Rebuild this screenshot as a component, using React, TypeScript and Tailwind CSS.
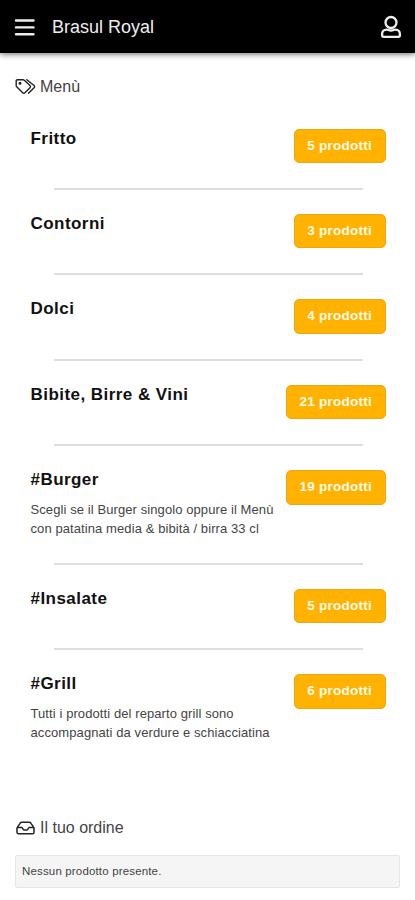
interface Category {
  name: string;
  count: number;
  description?: string;
}

const categories: Category[] = [
  { name: "Fritto", count: 5 },
  { name: "Contorni", count: 3 },
  { name: "Dolci", count: 4 },
  { name: "Bibite, Birre & Vini", count: 21 },
  {
    name: "#Burger",
    count: 19,
    description: "Scegli se il Burger singolo oppure il Menù con patatina media & bibità / birra 33 cl",
  },
  { name: "#Insalate", count: 5 },
  {
    name: "#Grill",
    count: 6,
    description: "Tutti i prodotti del reparto grill sono accompagnati da verdure e schiacciatina",
  },
];

function MenuIcon() {
  return (
    <svg width="21" height="18" viewBox="0 0 21 18" stroke="#eee" strokeWidth="2.4" strokeLinecap="round">
      <path d="M2 2.5h17.500M2 9.400h17.500M2 16.200h17.500" />
    </svg>
  );
}

function UserIcon() {
  return (
    <svg width="22" height="24" viewBox="0 0 22 24" fill="none" stroke="#eee" strokeWidth="2.3">
      <circle cx="11" cy="7.5" r="5.5" />
      <path d="M6.500 14.600c1.400 0 2.300.9 4.500.9s3.100-.9 4.500-.9c2.600 0 4.400 2 4.400 4.500v1.200c0 1-.6 1.600-1.600 1.600H3.700c-1 0-1.600-.6-1.600-1.600v-1.200c0-2.500 1.800-4.500 4.400-4.500z" />
    </svg>
  );
}

function TagsIcon() {
  return (
    <svg width="22" height="18" viewBox="0 0 22 18" fill="none" stroke="#222" strokeWidth="1.4" strokeLinejoin="round" strokeLinecap="round">
      <path d="M1.200 2.900v4.600c0 .5.200 1 .5 1.300l6 6c.6.6 1.600.6 2.200 0l5.100-5.100c.6-.6.6-1.600 0-2.200L9.300 2.200c-.3-.3-.8-.5-1.300-.5H2.400c-.7 0-1.200.5-1.200 1.200z" />
      <path d="M11.800 1.800l7.300 5.700c.7.600.7 1.600 0 2.200l-5.600 5.600" />
      <circle cx="5" cy="5.3" r=".8" fill="#222" />
    </svg>
  );
}

function TrayIcon() {
  return (
    <svg width="19" height="14" viewBox="0 0 19 14" fill="none" stroke="#222" strokeWidth="1.5" strokeLinejoin="round">
      <path d="M1 6.800 4 2.300c.4-.7 1-1.100 1.800-1.100h7.400c.8 0 1.400.4 1.800 1.100l3 4.500v4.400c0 .9-.7 1.600-1.600 1.600H2.600c-.9 0-1.600-.7-1.600-1.600z" />
      <path d="M1.200 6.500h4.600c.9 0 1 2.500 2.200 2.500h3c1.200 0 1.300-2.500 2.200-2.500h4.600" />
    </svg>
  );
}

function CategoryRow({ category }: { category: Category }) {
  return (
    <li className="group">
      <div className="flex items-start justify-between">
        <div className="w-[250px] pt-px">
          <h2 className="text-[17px] leading-[18px] font-bold tracking-[0.45px] whitespace-nowrap text-[#111]">
            {category.name}
          </h2>
          {category.description && (
            <p className="mt-[11px] text-[13px] leading-[19px] tracking-[0.09px] text-[#444]">
              {category.description}
            </p>
          )}
        </div>
        <button
          type="button"
          className="h-[34.6px] shrink-0 rounded-[5px] border border-[#eda710] bg-[#ffb300] px-[12.5px] text-[13.5px] font-bold tracking-[0.25px] whitespace-nowrap text-[#fffbe8]"
        >
          {category.count} prodotti
        </button>
      </div>
      <hr className="mx-[23px] mt-[24.8px] mb-6 border-t-2 border-[#dedede] group-last:hidden" />
    </li>
  );
}

export default function App() {
  return (
    <div className="h-[900px] overflow-hidden bg-white font-['Liberation_Sans',Arial,sans-serif] text-[#444]">
      <header className="flex h-[53px] items-center bg-black pr-[13px] pl-[14px] shadow-[0_1px_6px_rgba(0,0,0,0.6)]">
        <MenuIcon />
        <h1 className="ml-[17px] flex-1 text-lg text-[#eee]">Brasul Royal</h1>
        <UserIcon />
      </header>

      <main className="px-[15px] pt-6">
        <div className="flex h-5 items-center gap-[3px]">
          <TagsIcon />
          <span className="text-base">Menù</span>
        </div>

        <ul className="mt-[31.5px] h-[621px] pr-[14.5px] pl-[15.5px]">
          {categories.map((category) => (
            <CategoryRow key={category.name} category={category} />
          ))}
        </ul>

        <div className="mt-[68.5px] flex h-5 items-center gap-[5px] pl-px">
          <TrayIcon />
          <span className="text-base">Il tuo ordine</span>
        </div>
        <div className="mt-[17px] flex h-[33px] items-center rounded-[2px] border border-[#e6e6e6] bg-[#f5f5f5] px-1.5 text-[11.5px] tracking-[0.16px]">
          Nessun prodotto presente.
        </div>
      </main>
    </div>
  );
}
